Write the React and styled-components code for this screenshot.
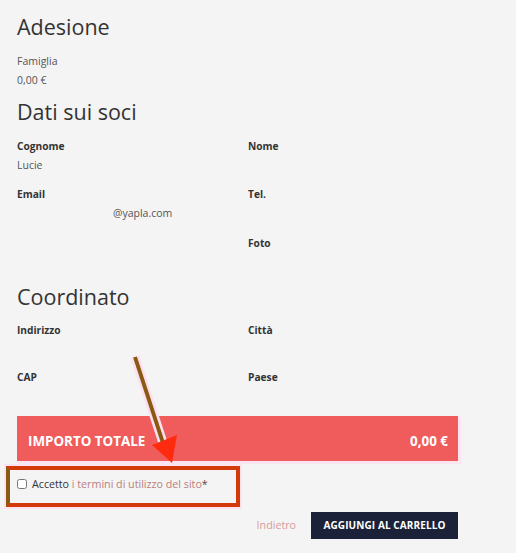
import styled, { createGlobalStyle } from 'styled-components';

const GlobalStyle = createGlobalStyle`
  html, body {
    margin: 0;
    padding: 0;
    background: #f4f4f4;
    font-family: 'Open Sans', 'Noto Sans', sans-serif;
    color: #333;
  }
`;

const Page = styled.div`
  position: relative;
  width: 516px;
  min-height: 553px;
  box-sizing: border-box;
  padding: 12px 58px 0 17px;
`;

const Heading = styled.h2`
  margin: ${(p) => p.$top || 0}px 0 ${(p) => p.$gap || 9}px;
  font-size: 21.5px;
  line-height: 30px;
  font-weight: 400;
  color: #333;
`;

const Line = styled.div`
  font-size: 10.5px;
  line-height: 19px;
  color: #555;
`;

const Section = styled.section``;

const Fields = styled.div`
  display: grid;
  grid-template-columns: 231px 1fr;
`;

const Field = styled.div`
  height: ${(p) => p.$h || 48}px;
`;

const Label = styled.div`
  font-size: 10.2px;
  font-weight: 700;
  line-height: 19px;
  color: #333;
`;

const Value = styled.div`
  font-size: 10.5px;
  line-height: 19px;
  color: #555;
  min-height: 19px;
`;

const Redacted = styled.span`
  display: inline-block;
  width: 96px;
`;

const TotalBar = styled.div`
  display: flex;
  align-items: center;
  justify-content: space-between;
  height: 45px;
  box-sizing: border-box;
  padding: 5px 10px 0 11px;
  background: #f05c5c;
  color: #fff;
  font-size: 13.4px;
  font-weight: 700;
  box-shadow: 2px 2px 0 1px #fde4f1;
`;

const TermsRow = styled.label`
  display: flex;
  align-items: center;
  gap: 5px;
  height: 46px;
  font-size: 10.7px;
  color: #333;
  padding-top: 1px;
  box-sizing: border-box;
`;

const Check = styled.input`
  width: 10px;
  height: 10px;
  margin: 0;
  accent-color: #555;
`;

const TermsLink = styled.a`
  color: #b97f7f;
  text-decoration: none;
  b {
    color: #6a4040;
    font-weight: 400;
  }
`;

const Actions = styled.div`
  display: flex;
  justify-content: flex-end;
  align-items: center;
  gap: 15px;
  margin-top: 5px;
`;

const BackLink = styled.a`
  font-size: 10.7px;
  color: #d59c9c;
  text-decoration: none;
`;

const CartButton = styled.button`
  height: 27px;
  width: 147px;
  border: none;
  background: #1b2138;
  color: #fff;
  font-family: inherit;
  font-size: 10px;
  font-weight: 700;
  letter-spacing: 0.1px;
  text-transform: uppercase;
  cursor: pointer;
`;

const Highlight = styled.div`
  position: absolute;
  left: 6px;
  top: 466px;
  width: 234px;
  height: 41px;
  box-sizing: border-box;
  border: 4px solid #d23a0c;
  border-left-color: #8a5a12;
  box-shadow: 0 0 0 2px #fde3f2;
  pointer-events: none;
`;

const ArrowLayer = styled.svg`
  position: absolute;
  left: 0;
  top: 0;
  pointer-events: none;
`;

function Arrow() {
  return (
    <ArrowLayer width="516" height="553" viewBox="0 0 516 553">
      <line x1="135" y1="357" x2="163" y2="443" stroke="#fde0f0" strokeWidth="9" />
      <line x1="135" y1="357" x2="163" y2="443" stroke="#8a5a12" strokeWidth="4" />
      <polygon points="152,445 177,435 172,463" fill="#ff2b0f" />
    </ArrowLayer>
  );
}

export default function App() {
  return (
    <>
      <GlobalStyle />
      <Page>
        <Section>
          <Heading $gap={9.5}>Adesione</Heading>
          <Line>Famiglia</Line>
          <Line>0,00 €</Line>
        </Section>
        <Section>
          <Heading $top={7.5} $gap={9.5}>Dati sui soci</Heading>
          <Fields>
            <Field $h={48}>
              <Label>Cognome</Label>
              <Value>Lucie</Value>
            </Field>
            <Field $h={48}>
              <Label>Nome</Label>
              <Value />
            </Field>
            <Field $h={49}>
              <Label>Email</Label>
              <Value>
                <Redacted />@yapla.com
              </Value>
            </Field>
            <Field $h={49}>
              <Label>Tel.</Label>
              <Value />
            </Field>
            <Field $h={48.5} />
            <Field $h={48.5}>
              <Label>Foto</Label>
              <Value />
            </Field>
          </Fields>
        </Section>
        <Section>
          <Heading $gap={8.5}>Coordinato</Heading>
          <Fields>
            <Field $h={47}>
              <Label>Indirizzo</Label>
            </Field>
            <Field $h={47}>
              <Label>Città</Label>
            </Field>
            <Field $h={48}>
              <Label>CAP</Label>
            </Field>
            <Field $h={48}>
              <Label>Paese</Label>
            </Field>
          </Fields>
        </Section>
        <TotalBar>
          <span>IMPORTO TOTALE</span>
          <span>0,00 €</span>
        </TotalBar>
        <TermsRow>
          <Check type="checkbox" />
          <span>
            Accetto{' '}
            <TermsLink href="#">
              i termini di utilizzo del sito<b>*</b>
            </TermsLink>
          </span>
        </TermsRow>
        <Actions>
          <BackLink href="#">Indietro</BackLink>
          <CartButton>Aggiungi al carrello</CartButton>
        </Actions>
        <Highlight />
        <Arrow />
      </Page>
    </>
  );
}
